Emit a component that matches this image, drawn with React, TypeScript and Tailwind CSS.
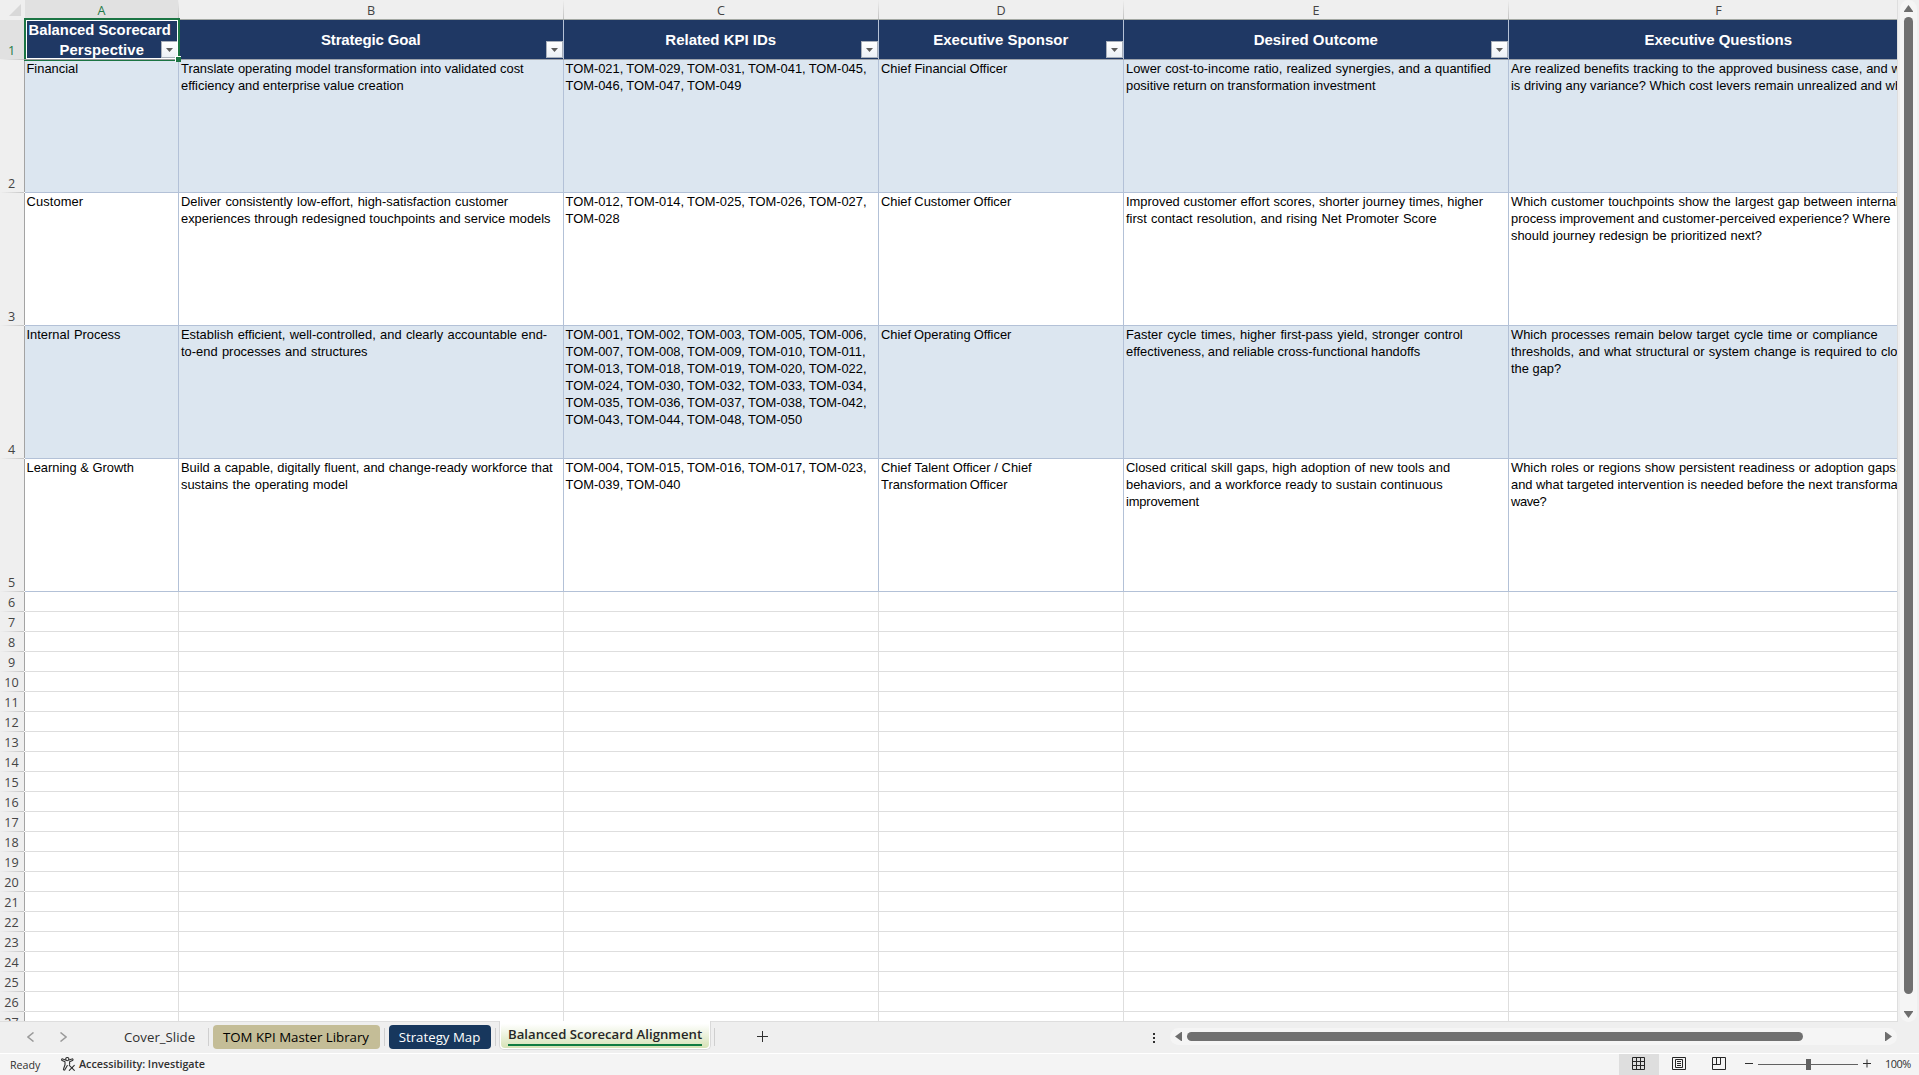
import type { ReactNode } from "react";

type Line = [text: string, spacing: string];
type Cell = Line[];

const COLUMNS = [
  { letter: "A", width: "w-[154px]", title: ["Balanced Scorecard", "Perspective"], tone: "text-[14.8px] leading-[20px]", inset: "pl-[1.5px]" },
  { letter: "B", width: "w-[385px]", title: ["Strategic Goal"], tone: "pt-[10px] text-[15px] leading-[19px] tracking-[-0.15px]", inset: "pl-[2px]" },
  { letter: "C", width: "w-[315px]", title: ["Related KPI IDs"], tone: "pt-[10px] text-[15px] leading-[19px]", inset: "pl-[1.5px]" },
  { letter: "D", width: "w-[245px]", title: ["Executive Sponsor"], tone: "pt-[10px] text-[15px] leading-[19px]", inset: "pl-[2px]" },
  { letter: "E", width: "w-[385px]", title: ["Desired Outcome"], tone: "pt-[10px] text-[15px] leading-[19px]", inset: "pl-[2px]" },
  { letter: "F", width: "w-[420px]", title: ["Executive Questions"], tone: "pt-[10px] text-[15px] leading-[19px]", inset: "pl-[2px]" },
];

const ID = "[word-spacing:-0.34px]";

const ROWS: { n: number; fill: string; cells: Cell[] }[] = [
  {
    n: 2,
    fill: "bg-[#dce6f0]",
    cells: [
      [["Financial", ""]],
      [
        ["Translate operating model transformation into validated cost", "[word-spacing:0.11px]"],
        ["efficiency and enterprise value creation", "[word-spacing:-0.16px]"],
      ],
      [
        ["TOM-021, TOM-029, TOM-031, TOM-041, TOM-045,", ID],
        ["TOM-046, TOM-047, TOM-049", ID],
      ],
      [["Chief Financial Officer", "[word-spacing:-0.2px]"]],
      [
        ["Lower cost-to-income ratio, realized synergies, and a quantified", "[word-spacing:0.45px]"],
        ["positive return on transformation investment", "[word-spacing:-0.32px]"],
      ],
      [
        ["Are realized benefits tracking to the approved business case, and what", "[word-spacing:0.37px]"],
        ["is driving any variance? Which cost levers remain unrealized and why?", "[word-spacing:0.06px]"],
      ],
    ],
  },
  {
    n: 3,
    fill: "bg-white",
    cells: [
      [["Customer", "tracking-[0.1px]"]],
      [
        ["Deliver consistently low-effort, high-satisfaction customer", "[word-spacing:0.7px]"],
        ["experiences through redesigned touchpoints and service models", "[word-spacing:0.2px]"],
      ],
      [
        ["TOM-012, TOM-014, TOM-025, TOM-026, TOM-027,", ID],
        ["TOM-028", ""],
      ],
      [["Chief Customer Officer", "[word-spacing:-0.3px]"]],
      [
        ["Improved customer effort scores, shorter journey times, higher", "[word-spacing:0.28px]"],
        ["first contact resolution, and rising Net Promoter Score", "[word-spacing:0.68px]"],
      ],
      [
        ["Which customer touchpoints show the largest gap between internal", "[word-spacing:0.65px]"],
        ["process improvement and customer-perceived experience? Where", "[word-spacing:-0.2px]"],
        ["should journey redesign be prioritized next?", "[word-spacing:0.33px]"],
      ],
    ],
  },
  {
    n: 4,
    fill: "bg-[#dce6f0]",
    cells: [
      [["Internal Process", "[word-spacing:0.84px]"]],
      [
        ["Establish efficient, well-controlled, and clearly accountable end-", "[word-spacing:0.75px]"],
        ["to-end processes and structures", "[word-spacing:0.8px]"],
      ],
      [
        ["TOM-001, TOM-002, TOM-003, TOM-005, TOM-006,", ID],
        ["TOM-007, TOM-008, TOM-009, TOM-010, TOM-011,", ID],
        ["TOM-013, TOM-018, TOM-019, TOM-020, TOM-022,", ID],
        ["TOM-024, TOM-030, TOM-032, TOM-033, TOM-034,", ID],
        ["TOM-035, TOM-036, TOM-037, TOM-038, TOM-042,", ID],
        ["TOM-043, TOM-044, TOM-048, TOM-050", ID],
      ],
      [["Chief Operating Officer", "[word-spacing:-0.6px]"]],
      [
        ["Faster cycle times, higher first-pass yield, stronger control", "[word-spacing:1.02px]"],
        ["effectiveness, and reliable cross-functional handoffs", "[word-spacing:-0.3px]"],
      ],
      [
        ["Which processes remain below target cycle time or compliance", "[word-spacing:0.88px]"],
        ["thresholds, and what structural or system change is required to close", "[word-spacing:0.74px]"],
        ["the gap?", ""],
      ],
    ],
  },
  {
    n: 5,
    fill: "bg-white",
    cells: [
      [["Learning & Growth", ""]],
      [
        ["Build a capable, digitally fluent, and change-ready workforce that", "[word-spacing:0.33px]"],
        ["sustains the operating model", "[word-spacing:0.72px]"],
      ],
      [
        ["TOM-004, TOM-015, TOM-016, TOM-017, TOM-023,", ID],
        ["TOM-039, TOM-040", ID],
      ],
      [
        ["Chief Talent Officer / Chief", "[word-spacing:0.17px]"],
        ["Transformation Officer", "[word-spacing:-1px]"],
      ],
      [
        ["Closed critical skill gaps, high adoption of new tools and", "[word-spacing:0.58px]"],
        ["behaviors, and a workforce ready to sustain continuous", "[word-spacing:0.2px]"],
        ["improvement", "tracking-[-0.15px]"],
      ],
      [
        ["Which roles or regions show persistent readiness or adoption gaps,", "[word-spacing:0.48px]"],
        ["and what targeted intervention is needed before the next transformation", "[word-spacing:-0.1px]"],
        ["wave?", "tracking-[-0.4px]"],
      ],
    ],
  },
];

const EMPTY_ROWS = Array.from({ length: 22 }, (_, i) => i + 6);

function RowHead({ n, selected = false }: { n: number; selected?: boolean }) {
  return (
    <div
      className={
        "relative flex w-[25px] shrink-0 items-end justify-center border-r border-[#a3a3a3] pr-px font-['Open_Sans',sans-serif] text-[12.6px] leading-[17px] " +
        (selected ? "bg-[#e1e1e1] text-[#1e7a48]" : "bg-[#efefef] text-[#444444]")
      }
    >
      {n}
      <span className="absolute inset-x-0 -bottom-px h-px bg-linear-to-r from-[#efefef] to-[#c6c6c6]" />
    </div>
  );
}

function FilterButton() {
  return (
    <span className="absolute right-0 bottom-px flex size-[17px] items-center justify-center border border-[#a9b0bb] bg-linear-to-b from-white to-[#ecf0f6]">
      <svg width="7" height="4" viewBox="0 0 7 4" className="mt-px">
        <path d="M0 0h7L3.5 4z" fill="#5c5c5c" />
      </svg>
    </span>
  );
}

function Selection() {
  return (
    <>
      <span className="pointer-events-none absolute -top-[2px] -left-px z-10 h-[43px] w-[156px] border-2 border-[#1b7443]">
        <span className="block h-full w-full border border-white" />
      </span>
      <span className="absolute top-[39px] -left-px z-10 h-px w-[153px] bg-[#9c9c9c]" />
      <span className="absolute top-[36px] left-[150px] z-10 size-[6px] border-t border-l border-white bg-[#1b7443]" />
    </>
  );
}

function Tab({ children, className }: { children: ReactNode; className: string }) {
  return (
    <div className={"flex h-6 items-center justify-center rounded-[4px] pr-px leading-[20px] " + className}>
      {children}
    </div>
  );
}

function TabDivider({ className = "" }: { className?: string }) {
  return <span className={"h-[18px] w-px bg-[#cfcfcf] " + className} />;
}

function Sheet() {
  return (
    <div className="flex h-[1022px] w-[1897px] flex-col overflow-hidden bg-white">
      <div className="flex h-5 w-[1929px] shrink-0 bg-[#efefef] font-['Open_Sans',sans-serif] text-[12.6px] leading-[21px] text-[#444444]">
        <div className="flex w-[25px] items-start justify-end pt-[4px] pr-[4px]">
          <svg width="12" height="12" viewBox="0 0 12 12">
            <path d="M12 0v12H0z" fill="#d8d8d8" />
          </svg>
        </div>
        {COLUMNS.map((c) => (
          <div
            key={c.letter}
            className={
              "relative border-b border-[#a3a8a3] pr-px text-center " +
              c.width +
              (c.letter === "A" ? " bg-[#e1e1e1] text-[#1e7a48]" : "")
            }
          >
            {c.letter}
            <span className="absolute top-0 right-0 h-[19px] w-px bg-linear-to-b from-[#efefef] to-[#c2c2c2]" />
          </div>
        ))}
      </div>

      <div className="flex h-10 w-[1954px] shrink-0 border-b border-[#9da3ac]">
        <RowHead n={1} selected />
        {COLUMNS.map((c) => (
          <div
            key={c.letter}
            className={
              "relative flex flex-col items-center border-r border-[#b4c1d6] bg-[#1f3864] pr-[0.5px] font-['Liberation_Sans',Arial,sans-serif] font-bold whitespace-nowrap text-white " +
              c.width +
              " " +
              c.tone
            }
          >
            {c.title.map((t, i) => (
              <span key={t} className={c.title.length > 1 ? (i === 0 ? "mr-[3px]" : "ml-px tracking-[0.15px]") : ""}>
                {t}
              </span>
            ))}
            {c.letter !== "F" && <FilterButton />}
            {c.letter === "A" && <Selection />}
          </div>
        ))}
      </div>

      {ROWS.map((r) => (
        <div key={r.n} className="flex h-[133px] w-[1954px] shrink-0">
          <div className="flex border-b border-transparent">
            <RowHead n={r.n} />
          </div>
          {r.cells.map((cell, i) => (
            <div
              key={i}
              className={
                "border-r border-b border-[#b3c1d7] font-['Liberation_Sans',Arial,sans-serif] text-[12.9px] leading-[17px] whitespace-nowrap text-black " +
                COLUMNS[i].width +
                " " +
                COLUMNS[i].inset +
                " " +
                r.fill
              }
            >
              {cell.map(([text, spacing]) => (
                <div key={text} className={spacing}>
                  {text}
                </div>
              ))}
            </div>
          ))}
        </div>
      ))}

      {EMPTY_ROWS.map((n) => (
        <div key={n} className="flex h-5 w-[1954px] shrink-0">
          <div className="flex border-b border-transparent">
            <RowHead n={n} />
          </div>
          {COLUMNS.map((c) => (
            <div key={c.letter} className={"border-r border-b border-[#dedede] " + c.width} />
          ))}
        </div>
      ))}
    </div>
  );
}

function VerticalScrollbar() {
  return (
    <div className="flex w-[22px] flex-col border-l border-[#dedede] bg-[#efefef] pl-[2px]">
      <div className="flex h-[1022px] w-[17px] flex-col items-center rounded-full bg-[#f5f5f5] pt-[5px] pb-[4px]">
        <svg width="9" height="7" viewBox="0 0 9 7">
          <path d="M4.5 0 9 6.2V7H0v-.8z" fill="#6e6e6e" />
        </svg>
        <span className="mt-[5px] h-[977px] w-[9px] rounded-full bg-[#707070]" />
        <svg width="9" height="7" viewBox="0 0 9 7" className="mt-auto">
          <path d="M4.5 7 9 .8V0H0v.8z" fill="#6e6e6e" />
        </svg>
      </div>
    </div>
  );
}

function TabBar() {
  return (
    <div className="relative flex h-[31px] shrink-0 bg-[#efefef] font-['Open_Sans',sans-serif] text-[13.25px] text-[#303030]">
      <span className="absolute -top-px left-0 h-px w-[499px] bg-[#dedede]" />
      <span className="absolute -top-px left-[711px] h-px w-[1187px] bg-[#dedede]" />
      <div className="flex h-[30px] items-center leading-[20px]">
        <svg width="40" height="10" viewBox="0 0 40 10" className="ml-[27px]" fill="none" stroke="#9a9a9a" strokeWidth="1.5">
          <path d="M6.5.5 1 5l5.500 4.500M33.500.5 39 5l-5.500 4.500" />
        </svg>
        <span className="ml-[57px] w-[72px] whitespace-nowrap">Cover_Slide</span>
        <TabDivider className="ml-[12px]" />
        <Tab className="ml-[4px] w-[167px] bg-[#c4bd97] text-black">TOM KPI Master Library</Tab>
        <TabDivider className="ml-[4px]" />
        <Tab className="ml-[4px] w-[102px] bg-[#17375d] text-white">Strategy Map</Tab>
        <TabDivider className="ml-[4px]" />
      </div>
      <div className="relative z-10 -mt-px ml-[3px] h-[29px] w-[212px] rounded-b-[5px] border border-t-0 border-[#d9d9d9] bg-white px-px pb-px">
        <div className="flex h-full w-full justify-center rounded-b-[4px] bg-linear-to-b from-white from-10% to-[#d6e2b6]">
          <span className="mt-[3px] h-[22px] w-[194px] border-b-2 border-[#107c41] text-[13.17px] leading-[20px] font-semibold tracking-[0.02px] whitespace-nowrap text-[#262626]">
            Balanced Scorecard Alignment
          </span>
        </div>
      </div>
      <div className="flex h-[30px] flex-1 items-center">
        <TabDivider className="ml-[3px]" />
        <svg width="11" height="11" viewBox="0 0 11 11" className="-mt-px ml-[42px]" stroke="#303030">
          <path d="M5.500 0v11M0 5.500h11" />
        </svg>
        <svg width="2" height="10" viewBox="0 0 2 10" className="mt-[2px] ml-[385px]" fill="#303030">
          <path d="M0 0h2v2H0zM0 4h2v2H0zM0 8h2v2H0z" />
        </svg>
        <div className="-mt-px ml-[15px] flex h-[17px] w-[727px] items-center rounded-full bg-[#f5f5f5] pl-[5px]">
          <svg width="7" height="9" viewBox="0 0 7 9">
            <path d="M0 4.500 6.200 0H7v9h-.8z" fill="#6e6e6e" />
          </svg>
          <span className="ml-[5px] h-[9px] w-[616px] rounded-full bg-[#707070]" />
          <svg width="7" height="9" viewBox="0 0 7 9" className="ml-[82px]">
            <path d="M7 4.500.8 0H0v9h.8z" fill="#6e6e6e" />
          </svg>
        </div>
      </div>
    </div>
  );
}

function StatusBar() {
  return (
    <div className="flex h-[22px] shrink-0 border-t border-white bg-[#f4f4f4] font-['Open_Sans',sans-serif] text-[#303030]">
      <span className="mt-px ml-[10px] w-[51px] text-[10.7px] leading-[20px]">Ready</span>
      <svg width="15" height="15" viewBox="0 0 15 15" className="mt-[3px]" fill="none" stroke="#303030" strokeWidth="1.1" strokeLinecap="round" strokeLinejoin="round">
        <circle cx="6.300" cy="2.100" r="1.600" />
        <path d="M4.500 3 1.800 1.900a.8.8 0 0 0-.7 1.500L4 4.800v3L2.500 12a.8.8 0 0 0 1.500.6L6.300 8.500M8.100 3l2.700-1.100a.8.8 0 0 1 .7 1.500L8.600 4.800v2.400M8.300 8.300l5 5M13.300 8.300l-5 5" />
      </svg>
      <span className="ml-[3px] text-[10.75px] leading-[20px] font-semibold whitespace-nowrap">
        Accessibility: Investigate
      </span>
      <div className="ml-auto flex">
        <div className="flex w-10 items-start bg-[#dedede] pt-[3px] pl-[13px]">
          <svg width="13" height="13" viewBox="0 0 13 13" fill="none" stroke="#262626">
            <path d="M.5.5h12v12H.5zM4.500.5v12M8.500.5v12M.5 4.500h12M.5 8.500h12" />
          </svg>
        </div>
        <div className="flex w-10 items-start pt-[3px] pl-[13px]">
          <svg width="14" height="13" viewBox="0 0 14 13" fill="none" stroke="#262626">
            <path d="M.5.5h13v12H.5zM3.500 2.500h7v8h-7zM5 4.500h4M5 6.500h4M5 8.500h4" />
          </svg>
        </div>
        <div className="flex w-10 items-start pt-[3px] pl-[13px]">
          <svg width="14" height="13" viewBox="0 0 14 13" fill="none" stroke="#262626">
            <path d="M.5.5h13v12H.5zM.5 7.500h8M4.500.5v7M8.500.5v7" />
          </svg>
        </div>
        <svg width="126" height="13" viewBox="0 0 126 13" className="mt-[3px] ml-[6px]" fill="none">
          <path d="M0 6.500h8M118 6.500h8M122 2.500v8" stroke="#303030" />
          <path d="M13 7.500h100" stroke="#616161" />
          <path d="M61 2h5v11h-5z" fill="#616161" />
        </svg>
        <span className="ml-[14px] w-[34px] text-[10.900px] leading-[20px] tracking-[-0.45px]">100%</span>
      </div>
    </div>
  );
}

export default function App() {
  return (
    <div className="flex h-[1075px] w-[1919px] flex-col overflow-hidden bg-[#efefef]">
      <div className="flex h-[1022px] shrink-0">
        <Sheet />
        <VerticalScrollbar />
      </div>
      <TabBar />
      <StatusBar />
    </div>
  );
}
